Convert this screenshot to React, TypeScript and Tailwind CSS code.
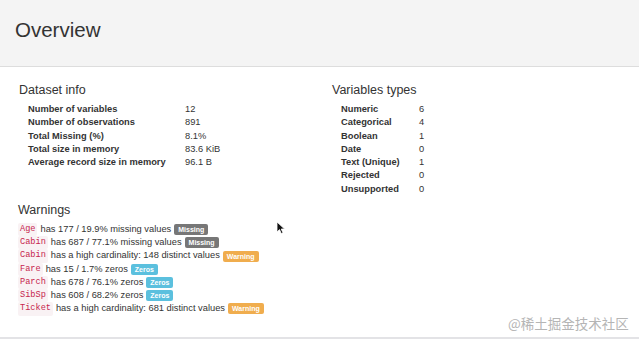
import React from 'react'

const datasetInfo = [
  ['Number of variables', '12'],
  ['Number of observations', '891'],
  ['Total Missing (%)', '8.1%'],
  ['Total size in memory', '83.6 KiB'],
  ['Average record size in memory', '96.1 B'],
]

const varTypes = [
  ['Numeric', '6'],
  ['Categorical', '4'],
  ['Boolean', '1'],
  ['Date', '0'],
  ['Text (Unique)', '1'],
  ['Rejected', '0'],
  ['Unsupported', '0'],
]

type Kind = 'missing' | 'warning' | 'zeros'

const warnings: [string, string, Kind][] = [
  ['Age', 'has 177 / 19.9% missing values', 'missing'],
  ['Cabin', 'has 687 / 77.1% missing values', 'missing'],
  ['Cabin', 'has a high cardinality: 148 distinct values', 'warning'],
  ['Fare', 'has 15 / 1.7% zeros', 'zeros'],
  ['Parch', 'has 678 / 76.1% zeros', 'zeros'],
  ['SibSp', 'has 608 / 68.2% zeros', 'zeros'],
  ['Ticket', 'has a high cardinality: 681 distinct values', 'warning'],
]

function Badge({ kind }: { kind: Kind }) {
  if (kind === 'missing')
    return <span className="ml-[3px] rounded-[2px] bg-[#777777] px-[4px] text-[7px] font-bold leading-[11px] text-white">Missing</span>
  if (kind === 'warning')
    return <span className="ml-[3px] rounded-[2px] bg-[#f0ad4e] px-[4px] text-[7px] font-bold leading-[11px] text-white">Warning</span>
  return <span className="ml-[3px] rounded-[2px] bg-[#5bc0de] px-[4px] text-[7px] font-bold leading-[11px] text-white">Zeros</span>
}

export default function App() {
  return (
    <div className="relative h-[342px] w-[639px] overflow-hidden bg-white font-['Liberation_Sans',Arial,sans-serif] text-[#333]">
      <header className="flex h-[67px] items-center border-b border-[#dddddd] bg-[#f4f4f4] px-[15px]">
        <h1 className="text-[20.5px] leading-none text-[#333] -mt-[6px]">Overview</h1>
      </header>

      <div className="flex pt-[16px]">
        <div className="w-[320px] pl-[19px]">
          <h2 className="text-[12.5px] leading-[15px]">Dataset info</h2>
          <table className="ml-[9px] mt-[5px] text-[9.3px] leading-[13.3px]">
            <tbody>
              {datasetInfo.map(([k, v]) => (
                <tr key={k}>
                  <th className="w-[157px] p-0 text-left font-bold">{k}</th>
                  <td className="p-0">{v}</td>
                </tr>
              ))}
            </tbody>
          </table>
        </div>
        <div className="pl-[12px]">
          <h2 className="text-[12.5px] leading-[15px]">Variables types</h2>
          <table className="ml-[9px] mt-[5px] text-[9.3px] leading-[13.3px]">
            <tbody>
              {varTypes.map(([k, v]) => (
                <tr key={k}>
                  <th className="w-[78px] p-0 text-left font-bold">{k}</th>
                  <td className="p-0">{v}</td>
                </tr>
              ))}
            </tbody>
          </table>
        </div>
      </div>

      <div className="mt-[7px] pl-[18px]">
        <h2 className="text-[12.5px] leading-[15px]">Warnings</h2>
        <ul className="mt-[5px] text-[9.3px] leading-[13.2px]">
          {warnings.map(([name, text, kind], i) => (
            <li key={i} className="flex items-center whitespace-nowrap">
              <code className="rounded-[2px] bg-[#f9f2f4] px-[2px] font-['Liberation_Mono',monospace] text-[8.6px] text-[#c7254e]">{name}</code>
              <span className="ml-[3px]">{text}</span>
              <Badge kind={kind} />
            </li>
          ))}
        </ul>
      </div>

      <svg className="absolute left-[276px] top-[221px]" width="10" height="14" viewBox="0 0 10 14">
        <path d="M1 1 L1 11 L3.5 8.6 L5.3 12.6 L7 11.8 L5.2 8 L8.6 8 Z" fill="#111" stroke="#fff" strokeWidth="0.8" />
      </svg>

      <div className="absolute left-[508px] top-[317px] text-[13.5px] leading-none text-[#b5b5b5] font-['Noto_Sans_CJK_SC',sans-serif]">@稀土掘金技术社区</div>
      <div className="absolute bottom-[3px] left-0 h-[2px] w-full bg-[#e3e3e6]" />
    </div>
  )
}
